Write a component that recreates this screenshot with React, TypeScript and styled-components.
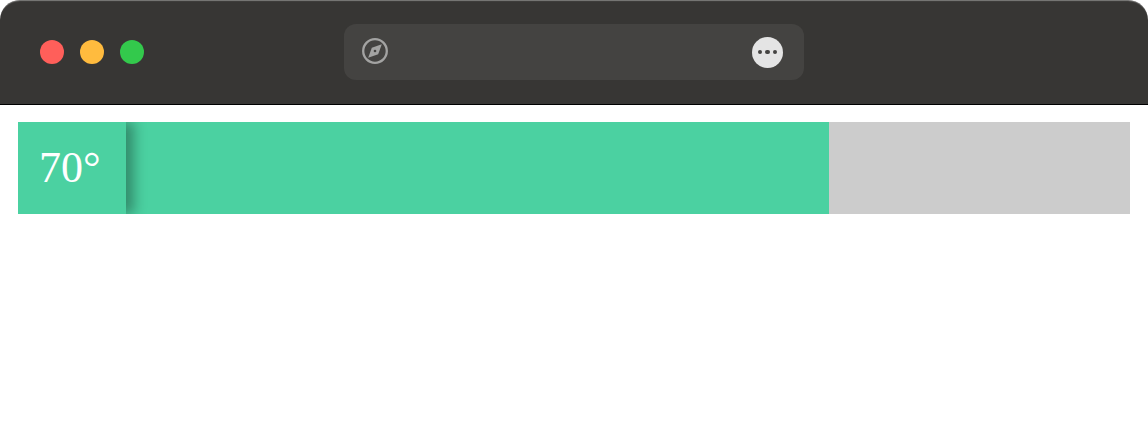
import React from "react";
import styled, { createGlobalStyle } from "styled-components";

const Global = createGlobalStyle`
  html, body { margin: 0; padding: 0; background: #fff; }
  body { width: 1148px; height: 448px; overflow: hidden; }
`;

const Page = styled.div`
  width: 1148px;
  height: 448px;
  display: flex;
  flex-direction: column;
  background: #fff;
`;

const TitleBar = styled.header`
  box-sizing: border-box;
  height: 105px;
  flex: none;
  display: flex;
  align-items: center;
  padding: 0 40px;
  background: #373634;
  border-radius: 20px 20px 0 0;
  border-bottom: 1px solid #000;
  box-shadow: inset 0 2px 1px -1px rgba(255, 255, 255, 0.35);
`;

const Lights = styled.div`
  display: flex;
  gap: 16px;
  flex: none;
`;

const Light = styled.span<{ $color: string }>`
  width: 24px;
  height: 24px;
  border-radius: 50%;
  background: ${(p) => p.$color};
`;

const AddressBar = styled.div`
  box-sizing: border-box;
  width: 460px;
  height: 56px;
  margin-left: 200px;
  padding: 0 21px 2px 17px;
  display: flex;
  align-items: center;
  justify-content: space-between;
  background: #444341;
  border-radius: 12px;
`;

const MoreButton = styled.span`
  width: 31px;
  height: 31px;
  border-radius: 50%;
  background: #e4e4e4;
  display: flex;
  align-items: center;
  justify-content: center;
  gap: 3px;
  margin-top: 2px;
`;

const Dot = styled.span`
  width: 4.4px;
  height: 4.4px;
  border-radius: 50%;
  background: #444341;
`;

const Content = styled.main`
  padding: 17px 18px 0;
`;

const Track = styled.div`
  height: 92px;
  background: #ccc;
  overflow: hidden;
`;

const Fill = styled.div<{ $percent: number }>`
  width: ${(p) => p.$percent}%;
  height: 100%;
  background: #4bd1a1;
  overflow: hidden;
`;

const Label = styled.div`
  box-sizing: border-box;
  width: 108px;
  height: 100%;
  display: flex;
  align-items: center;
  justify-content: center;
  padding: 0 4.4px 2px 0;
  background: #4bd1a1;
  box-shadow: 8px 0 12px rgba(0, 0, 0, 0.33);
  color: #fff;
  font: 44px "Liberation Serif", "Times New Roman", serif;
`;

export default function App() {
  return (
    <Page>
      <Global />
      <TitleBar>
        <Lights>
          <Light $color="#ff5f5a" />
          <Light $color="#ffbb3e" />
          <Light $color="#33c94c" />
        </Lights>
        <AddressBar>
          <svg width="28" height="28" viewBox="0 0 28 28" fill="none">
            <circle cx="14" cy="14" r="11.8" stroke="#a3a3a2" strokeWidth="2.3" />
            <path d="M20.8 7.2 L17.2 17.2 L7.2 20.8 L10.8 10.8 Z" fill="#a3a3a2" />
            <circle cx="14" cy="14" r="1.3" fill="#444341" />
          </svg>
          <MoreButton>
            <Dot />
            <Dot />
            <Dot />
          </MoreButton>
        </AddressBar>
      </TitleBar>
      <Content>
        <Track>
          <Fill $percent={72.93}>
            <Label>70°</Label>
          </Fill>
        </Track>
      </Content>
    </Page>
  );
}
